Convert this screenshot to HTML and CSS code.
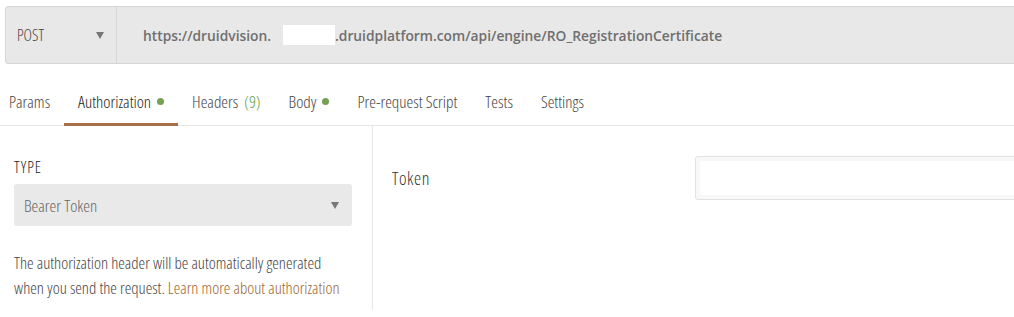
FILE: index.html
```html
<!doctype html>
<html lang="en">
  <head>
    <meta charset="UTF-8" />
    <title>Request – Authorization</title>
    <link rel="stylesheet" href="styles.css">
  </head>
  <body>
    <div class="request-bar">
      <div class="method">
        <span>POST</span>
        <span class="caret"></span>
      </div>
      <div class="url">https://druidvision.<span class="redacted"></span>.druidplatform.com/api/engine/RO_RegistrationCertificate</div>
    </div>

    <ul class="tabs">
      <li class="tab">Params</li>
      <li class="tab active">Authorization <span class="dot"></span></li>
      <li class="tab">Headers <span class="count">(9)</span></li>
      <li class="tab">Body <span class="dot"></span></li>
      <li class="tab">Pre-request Script</li>
      <li class="tab">Tests</li>
      <li class="tab">Settings</li>
    </ul>

    <div class="auth">
      <div class="auth-type">
        <h4 class="label">TYPE</h4>
        <div class="select">
          <span>Bearer Token</span>
          <span class="caret"></span>
        </div>
        <p class="help">
          The authorization header will be automatically generated
          when you send the request. <a href="#">Learn more about authorization</a>
        </p>
      </div>
      <div class="auth-fields">
        <label class="field-label">Token</label>
        <input class="field-input" type="text" />
      </div>
    </div>
  </body>
</html>
```

FILE: styles.css
```css
* {
  margin: 0;
  padding: 0;
  box-sizing: border-box;
}

body {
  width: 1014px;
  height: 317px;
  overflow: hidden;
  background: #fff;
  font-family: "Open Sans", sans-serif;
  font-stretch: 75%;
  font-weight: 300;
  color: #555;
}

.request-bar {
  display: flex;
  height: 58px;
  margin: 6px 0 0 5px;
  width: 1020px;
  background: #e8e8e8;
  border: 1px solid #d5d5d5;
  border-radius: 3px 0 0 3px;
}

.method {
  width: 111px;
  flex-shrink: 0;
  display: flex;
  align-items: center;
  justify-content: space-between;
  padding: 0 12px 0 11px;
  border-right: 1px solid #d5d5d5;
  font-size: 16px;
  color: #444;
}

.caret {
  width: 0;
  height: 0;
  border-left: 4px solid transparent;
  border-right: 4px solid transparent;
  border-top: 7px solid #777;
}

.url {
  display: flex;
  align-items: center;
  padding-left: 26px;
  font-size: 13.8px;
  font-weight: 600;
  font-stretch: 100%;
  color: #6f6f6f;
  white-space: nowrap;
}

.redacted {
  display: inline-block;
  width: 52px;
  height: 20px;
  margin-left: 12px;
  background: #fff;
}

.tabs {
  display: flex;
  list-style: none;
  margin-top: 16px;
  border-bottom: 1px solid #e6e6e6;
}

.tab {
  display: flex;
  align-items: center;
  gap: 6px;
  height: 46px;
  padding: 0 14px;
  border-bottom: 3px solid transparent;
  margin-bottom: -1px;
  font-size: 17px;
  color: #444;
}

.tab:first-child {
  padding-left: 9px;
}

.tab.active {
  color: #222;
  border-bottom-color: #a8704a;
}

.dot {
  width: 7px;
  height: 7px;
  border-radius: 50%;
  background: #76a054;
}

.count {
  color: #5f9e45;
}

.auth {
  display: flex;
}

.auth-type {
  width: 373px;
  flex-shrink: 0;
  padding: 32px 20px 10px 14px;
  border-right: 1px solid #e6e6e6;
}

.label {
  font-size: 16px;
  font-weight: 300;
  letter-spacing: 1px;
  line-height: 18px;
  color: #222;
  margin-bottom: 8px;
}

.select {
  height: 42px;
  display: flex;
  align-items: center;
  justify-content: space-between;
  padding: 0 13px 0 10px;
  background: #e9e9e9;
  border-radius: 3px;
  font-size: 17px;
  color: #666;
}

.help {
  margin-top: 24px;
  font-size: 16.7px;
  line-height: 25px;
  color: #444;
}

.help a {
  color: #9c6530;
  text-decoration: none;
}

.auth-fields {
  display: flex;
  align-items: center;
  align-self: flex-start;
  padding: 30px 0 0 19px;
}

.field-label {
  width: 303px;
  flex-shrink: 0;
  font-size: 18px;
  letter-spacing: 0.6px;
  color: #333;
}

.field-input {
  width: 340px;
  flex-shrink: 0;
  height: 44px;
  border: 1px solid #e2e2e2;
  border-radius: 3px;
  background: #fff;
  box-shadow: inset 0 0 0 4px #f8f8f8;
  outline: none;
}
```
